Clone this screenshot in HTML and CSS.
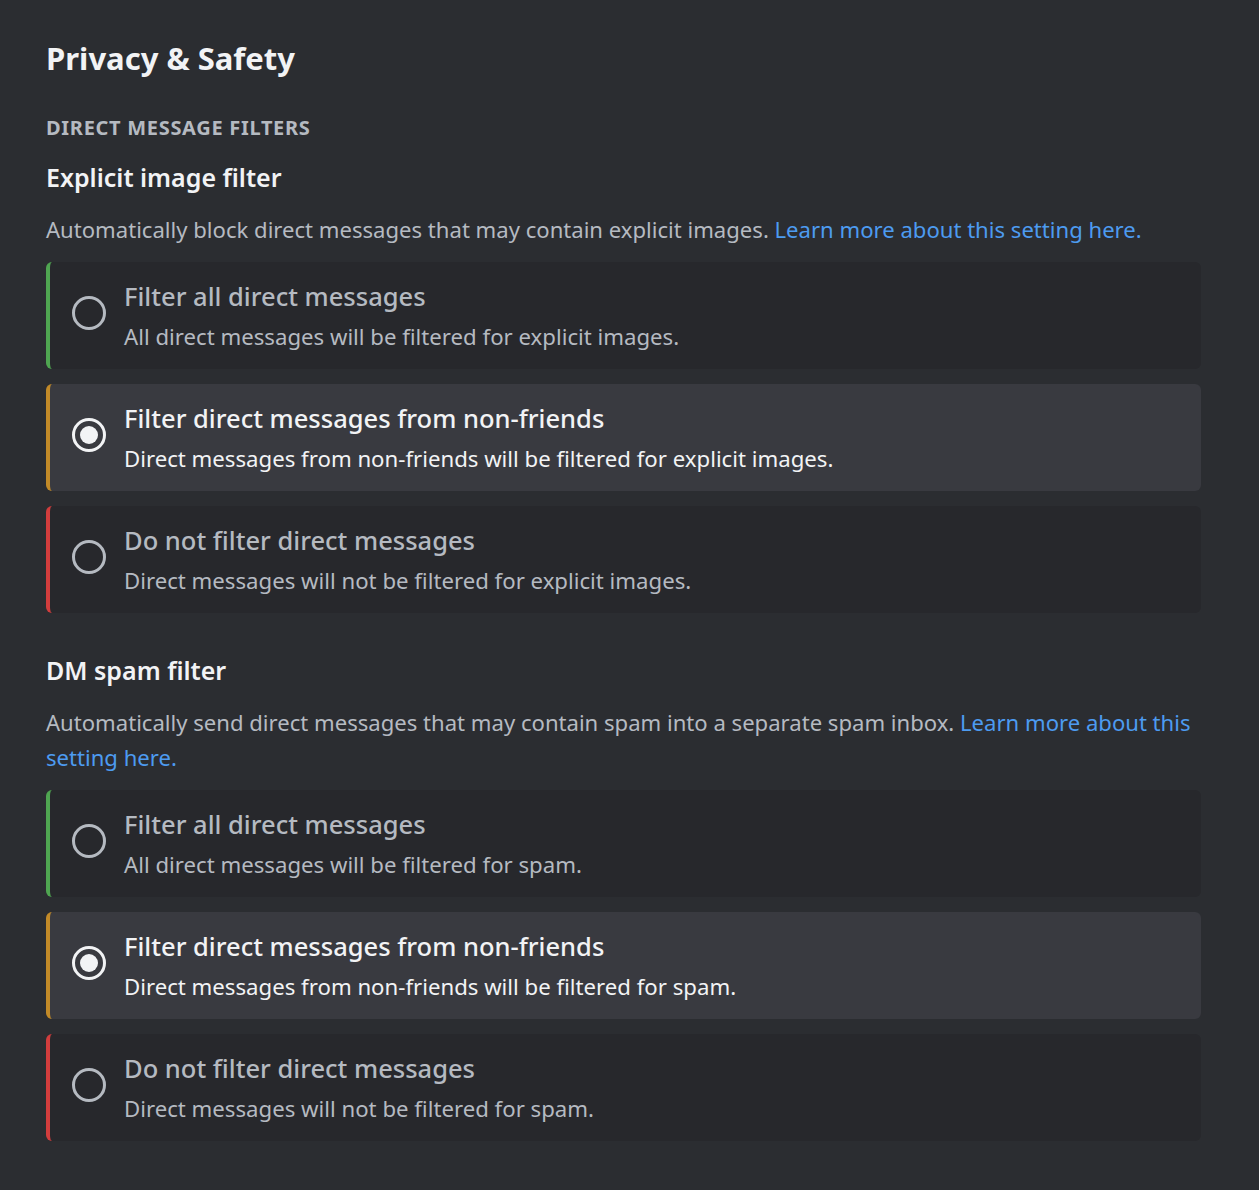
FILE: index.html
```html
<!DOCTYPE html>
<html lang="en">
<head>
<meta charset="utf-8">
<title>Privacy &amp; Safety</title>
<link rel="stylesheet" href="styles.css">
</head>
<body>
<main class="page">
  <h1 class="title">Privacy &amp; Safety</h1>
  <h2 class="eyebrow">Direct Message Filters</h2>

  <section class="group">
    <h3 class="group-title">Explicit image filter</h3>
    <p class="group-desc">Automatically block direct messages that may contain explicit images. <a class="link" href="#">Learn more about this setting here.</a></p>
    <div class="options">
      <div class="option green">
        <span class="radio"></span>
        <div class="option-text">
          <div class="option-title">Filter all direct messages</div>
          <div class="option-desc">All direct messages will be filtered for explicit images.</div>
        </div>
      </div>
      <div class="option orange selected">
        <span class="radio"></span>
        <div class="option-text">
          <div class="option-title">Filter direct messages from non-friends</div>
          <div class="option-desc">Direct messages from non-friends will be filtered for explicit images.</div>
        </div>
      </div>
      <div class="option red">
        <span class="radio"></span>
        <div class="option-text">
          <div class="option-title">Do not filter direct messages</div>
          <div class="option-desc">Direct messages will not be filtered for explicit images.</div>
        </div>
      </div>
    </div>
  </section>

  <section class="group second">
    <h3 class="group-title">DM spam filter</h3>
    <p class="group-desc">Automatically send direct messages that may contain spam into a separate spam inbox. <a class="link" href="#">Learn more about this setting here.</a></p>
    <div class="options">
      <div class="option green">
        <span class="radio"></span>
        <div class="option-text">
          <div class="option-title">Filter all direct messages</div>
          <div class="option-desc">All direct messages will be filtered for spam.</div>
        </div>
      </div>
      <div class="option orange selected">
        <span class="radio"></span>
        <div class="option-text">
          <div class="option-title">Filter direct messages from non-friends</div>
          <div class="option-desc">Direct messages from non-friends will be filtered for spam.</div>
        </div>
      </div>
      <div class="option red">
        <span class="radio"></span>
        <div class="option-text">
          <div class="option-title">Do not filter direct messages</div>
          <div class="option-desc">Direct messages will not be filtered for spam.</div>
        </div>
      </div>
    </div>
  </section>
</main>
</body>
</html>
```

FILE: styles.css
```css
html, body {
  margin: 0;
  padding: 0;
  background: #2b2d31;
}
body {
  font-family: "Noto Sans", "Open Sans", sans-serif;
  color: #f2f3f5;
}
.page {
  width: 1155px;
  padding: 38px 0 40px 46px;
}
.title {
  margin: 0;
  font-size: 31px;
  line-height: 40px;
  font-weight: 700;
  color: #f2f3f5;
}
.eyebrow {
  margin: 38px 0 0;
  font-size: 20px;
  line-height: 24px;
  letter-spacing: 0.7px;
  font-weight: 700;
  text-transform: uppercase;
  color: #b5bac1;
}
.group {
  margin-top: 21px;
}
.group.second {
  margin-top: 41px;
}
.group-title {
  margin: 0;
  font-size: 25px;
  line-height: 32px;
  font-weight: 600;
  color: #f2f3f5;
}
.group-desc {
  margin: 19px 0 0;
  font-size: 22.1px;
  line-height: 35px;
  color: #b5bac1;
}
.link {
  color: #4d9bf0;
  text-decoration: none;
}
.options {
  margin-top: 15px;
  display: flex;
  flex-direction: column;
  gap: 15px;
}
.option {
  display: flex;
  align-items: center;
  gap: 18px;
  padding: 18px 20px 17px 22px;
  border-radius: 6px;
  border-left: 4px solid;
  background: #27282c;
}
.option.green { border-left-color: #4fa551; }
.option.orange { border-left-color: #c28a28; }
.option.red { border-left-color: #d23d3d; }
.option.selected { background: #393a40; }
.radio {
  flex: none;
  width: 28px;
  height: 28px;
  margin-bottom: 7px;
  border: 3px solid #b5bac1;
  border-radius: 50%;
  display: flex;
  align-items: center;
  justify-content: center;
}
.option.selected .radio {
  border-color: #f2f3f5;
}
.option.selected .radio::after {
  content: "";
  width: 18px;
  height: 18px;
  border-radius: 50%;
  background: #f2f3f5;
}
.option-text {
  display: flex;
  flex-direction: column;
  gap: 10px;
}
.option-title {
  font-size: 25.5px;
  line-height: 32px;
  font-weight: 500;
  color: #b5bac1;
}
.option-desc {
  font-size: 22.2px;
  line-height: 30px;
  color: #b5bac1;
}
.option.selected .option-title,
.option.selected .option-desc {
  color: #f2f3f5;
}
```
